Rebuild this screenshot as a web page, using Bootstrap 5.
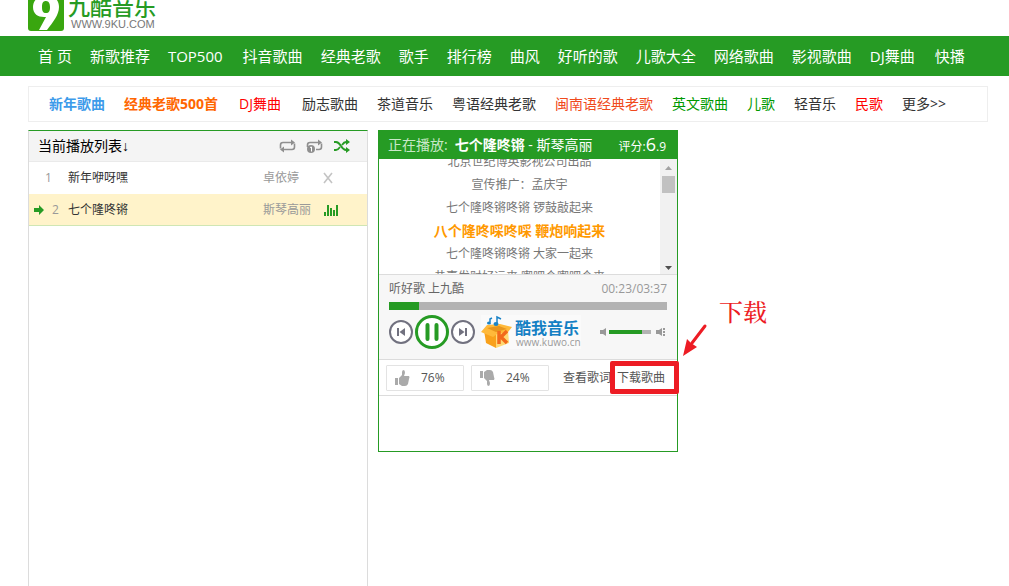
<!DOCTYPE html>
<html lang="zh-CN">
<head>
<meta charset="utf-8">
<meta name="viewport" content="width=device-width, initial-scale=1">
<title>九酷音乐</title>
<link href="https://cdn.jsdelivr.net/npm/bootstrap@5.3.0/dist/css/bootstrap.min.css" rel="stylesheet">
<script src="https://cdn.jsdelivr.net/npm/bootstrap@5.3.0/dist/js/bootstrap.bundle.min.js" defer></script>
<style>
:root{--green:#269b24;--line:#dcdcdc}
body{font-family:"Open Sans","Noto Sans CJK SC",sans-serif;font-size:12px;line-height:24px;color:#333;background:#fff}
a{text-decoration:none;color:inherit}
.page{max-width:960px;margin-left:28px;margin-right:21px}
.brand{height:36px;overflow:hidden}
.brand svg{display:block}
.mainnav{background:var(--green);height:40px;color:#fff;font-size:15px;line-height:40px;gap:18px;padding-left:38px;white-space:nowrap;overflow:hidden}
.subnav{height:36px;margin:10px 0 8px;border:1px solid #eee;font-size:14px;line-height:34px;gap:19px;padding-left:20px;white-space:nowrap;overflow:hidden}
.latin{padding-right:2px}
.c-blue{color:#3d9bea}.c-orange{color:#f60}.c-red{color:#f00}.c-rust{color:#f04a1c}.c-green{color:#090}
.columns{gap:10px}
.playlist{width:340px;border:1px solid var(--line);border-top-color:var(--green);border-bottom:0;min-height:calc(100vh - 130px)}
.listhead{height:31px;background:#f4f4f4;border-bottom:1px solid #eaeaea;font-size:14px;line-height:29px;color:#000;padding:0 17px 0 9px}
.arrowtext{font-family:"Liberation Sans",sans-serif}
.modes{gap:10px}
.iconbtn{border:0;background:none;padding:0;display:flex;align-items:center;color:inherit}
.songs{table-layout:fixed;width:100%;border-collapse:separate;border-spacing:0;line-height:30px}
.songs td{padding:0;height:32px;white-space:nowrap;vertical-align:middle}
.songs .playing td{background:#fff3ca;border-bottom:1px solid #cfe6b4}
.songs .num{color:#999;padding-left:16px}
.songs .playing .num{padding-left:5px}
.songs .who{color:#999}
.player{width:300px;border:1px solid var(--green);min-height:322px}
.playhead{background:var(--green);color:#fff;height:28px;line-height:27px;font-size:14px;padding:0 11px 0 9px;white-space:nowrap}
.playhead .tag{color:#c9e8c8;margin-right:7px}
.score{font-size:12px}
.score .big{font-size:18px}
.lyricbox{height:115px;overflow:hidden}
.lyrics{margin-top:-9px;line-height:23px;color:#777;text-align:center;white-space:nowrap}
.lyrics p{margin:0;height:23px}
.lyrics .now{color:#f90;font-size:14px;font-weight:700}
.sbar{width:17px;background:#f1f1f1}
.sthumb{width:13px;height:17px;background:#c1c1c1}
.controls{background:#f7f7f7;border-top:1px solid var(--line);border-bottom:1px solid var(--line);height:86px;padding:2px 10px 0;color:#666}
.clock{color:#999}
.track{height:8px;background:#b3b3b3;margin:1px 0 5px}
.fill{background:var(--green);height:100%}
.buttons{gap:2px}
.vol{width:42px;height:4px;background:#b3b3b3;margin:0 5px 0 2px}
.votes{height:36px;border-bottom:1px solid var(--line);padding:0 12px 0 7px;color:#555;white-space:nowrap}
.vote{width:78px;height:26px;border:1px solid #e3e3e3;background:#fff;border-radius:1px;color:#555;padding:0 8px;line-height:24px;gap:11px;margin-right:7px}
.words{margin-left:7px;margin-right:6px}
.ring{left:-7px;top:-5px;width:69px;height:33px;border:5px solid #ed1c24;border-radius:2px;pointer-events:none}
.pointer{left:65px;top:-43px;pointer-events:none}
.hint{left:102px;top:-67px;font-size:24px;font-weight:500;line-height:24px;color:#ed1c24;font-family:"Noto Serif CJK SC","Noto Sans CJK SC",serif}
</style>
</head>
<body>
<header class="page brand">
<a href="#" aria-label="九酷音乐"><svg width="130" height="36" viewBox="0 0 130 36">
<rect y="-8" width="36" height="39" rx="3" fill="#39a60f"/>
<path d="M18 -5C10 -5 5 1 5 7C5 14 10 17 16 17H18L11 30H19C25 22 31 15 31 7C31 0 26 -5 18 -5ZM18 1C21 1 22 4 22 7C22 11 21 13 18 13C15 13 14 11 14 7C14 3 15 1 18 1Z" fill="#fff" fill-rule="evenodd"/>
<text x="40" y="15" font-size="22" font-weight="500" fill="#269b24">九酷音乐</text>
<text x="43" y="28" font-size="11" fill="#777" font-family="Liberation Sans, sans-serif">WWW.9KU.COM</text>
</svg></a>
</header>
<nav class="mainnav d-flex">
<a href="#">首 页</a><a href="#">新歌推荐</a><a href="#" class="latin">TOP500</a><a href="#">抖音歌曲</a><a href="#">经典老歌</a><a href="#">歌手</a><a href="#">排行榜</a><a href="#">曲风</a><a href="#">好听的歌</a><a href="#">儿歌大全</a><a href="#">网络歌曲</a><a href="#">影视歌曲</a><a href="#" class="latin">DJ舞曲</a><a href="#">快播</a>
</nav>
<main class="page">
<nav class="subnav d-flex">
<a href="#" class="c-blue fw-bold">新年歌曲</a><a href="#" class="c-orange fw-bold latin">经典老歌500首</a><a href="#" class="c-red latin">DJ舞曲</a><a href="#">励志歌曲</a><a href="#">茶道音乐</a><a href="#">粤语经典老歌</a><a href="#" class="c-rust">闽南语经典老歌</a><a href="#" class="c-green">英文歌曲</a><a href="#" class="c-green">儿歌</a><a href="#">轻音乐</a><a href="#" class="c-red">民歌</a><a href="#">更多&gt;&gt;</a>
</nav>
<div class="columns d-flex align-items-start">
<section class="playlist flex-shrink-0">
<div class="listhead d-flex justify-content-between">
<span>当前播放列表<span class="arrowtext">↓</span></span>
<div class="modes d-flex align-items-center">
<button class="iconbtn" type="button" aria-label="列表循环"><svg width="17" height="14" viewBox="0 0 17 14" fill="none" stroke="#8f8f8f" stroke-width="1.6"><path d="M1.500 9.500V6Q1.500 3.500 4 3.500H14M15.500 4.500V8Q15.500 10.500 13 10.500H3"/><path d="M12 .5L16 3.500L12 6.500ZM5 7.500L1 10.500L5 13.500Z" fill="#8f8f8f" stroke="none"/></svg></button>
<button class="iconbtn" type="button" aria-label="单曲循环"><svg width="17" height="14" viewBox="0 0 17 14" fill="none" stroke="#8f8f8f" stroke-width="1.6"><path d="M1.500 8V6Q1.500 3.500 4 3.500H14M15.500 4.500V8Q15.500 10.500 13 10.500H10"/><path d="M12 .5L16 3.500L12 6.500Z" fill="#8f8f8f" stroke="none"/><circle cx="5" cy="10" r="4" fill="#8f8f8f" stroke="none"/><path d="M4 8.500L5.500 8V12.500" stroke="#fff" stroke-width="1"/></svg></button>
<button class="iconbtn" type="button" aria-label="随机播放"><svg width="17" height="14" viewBox="0 0 17 14" fill="none" stroke="#269b24" stroke-width="1.8"><path d="M1 3H3C8 3 8 11 13 11H14M1 11H3C5 11 6 9.500 7 8M9 6C10 4.500 11 3 13 3H14"/><path d="M13 0L17 3L13 6ZM13 8L17 11L13 14Z" fill="#269b24" stroke="none"/></svg></button>
</div>
</div>
<table class="songs">
<colgroup><col style="width:39px"><col><col style="width:60px"><col style="width:44px"></colgroup>
<tbody>
<tr><td class="num">1</td><td>新年咿呀嘿</td><td class="who">卓依婷</td><td><button class="iconbtn" type="button" aria-label="删除"><svg width="11" height="12" viewBox="0 0 11 12" stroke="#c4c4c4" stroke-width="1.6"><path d="M1 1L9 11M9 1L1 11"/></svg></button></td></tr>
<tr class="playing"><td class="num"><svg class="me-2 align-middle" width="10" height="10" viewBox="0 0 10 10"><path d="M0 3H5V0L10 5L5 10V7H0Z" fill="#269b24"/></svg>2</td><td>七个隆咚锵</td><td class="who">斯琴高丽</td><td><svg class="d-block" width="15" height="12" viewBox="0 0 15 12" fill="#269b24"><path d="M1 8H3V12H1ZM4 1H6V12H4ZM7 4H9V12H7ZM10 6H12V12H10ZM13 1H15V12H13Z"/></svg></td></tr>
</tbody>
</table>
</section>
<section class="player flex-shrink-0">
<div class="playhead d-flex justify-content-between">
<div><span class="tag">正在播放:</span><b>七个隆咚锵</b> - 斯琴高丽</div>
<div class="score">评分:<span class="big">6</span>.9</div>
</div>
<div class="lyricbox d-flex">
<div class="lyrics flex-grow-1">
<p>北京世纪博英影视公司出品</p><p>宣传推广：孟庆宇</p><p>七个隆咚锵咚锵 锣鼓敲起来</p><p class="now">八个隆咚啋咚啋 鞭炮响起来</p><p>七个隆咚锵咚锵 大家一起来</p><p>恭喜发财好运来 嘲吧个嘲吧个来</p>
</div>
<div class="sbar d-flex flex-column align-items-center justify-content-between">
<div class="d-flex flex-column align-items-center"><svg width="17" height="17" viewBox="0 0 17 17"><path d="M5 11H12L8.500 7Z" fill="#a3a3a3"/></svg><div class="sthumb"></div></div>
<svg width="17" height="13" viewBox="0 0 17 13"><path d="M5 5H12L8.500 9Z" fill="#505050"/></svg>
</div>
</div>
<div class="controls">
<div class="d-flex justify-content-between"><span>听好歌 上九酷</span><span class="clock">00:23/03:37</span></div>
<div class="track"><div class="fill" style="width:10.8%"></div></div>
<div class="d-flex align-items-center justify-content-between">
<div class="buttons d-flex align-items-center">
<button class="iconbtn" type="button" aria-label="上一首"><svg width="24" height="24" viewBox="0 0 24 24"><circle cx="12" cy="12" r="11" fill="#fff" stroke="#71717f" stroke-width="2"/><path d="M8 8H10V16H8ZM16 8V16L10.500 12Z" fill="#71717f"/></svg></button>
<button class="iconbtn" type="button" aria-label="暂停"><svg width="34" height="34" viewBox="0 0 34 34"><circle cx="17" cy="17" r="15.500" fill="#fff" stroke="#269b24" stroke-width="3"/><path d="M12.500 10V24M21.500 10V24" stroke="#269b24" stroke-width="4" stroke-linecap="round"/></svg></button>
<button class="iconbtn" type="button" aria-label="下一首"><svg width="24" height="24" viewBox="0 0 24 24"><circle cx="12" cy="12" r="11" fill="#fff" stroke="#71717f" stroke-width="2"/><path d="M14 8H16V16H14ZM8 8V16L13.500 12Z" fill="#71717f"/></svg></button>
<a href="#" class="ms-1" aria-label="酷我音乐"><svg class="d-block" width="100" height="34" viewBox="0 0 100 34">
<rect width="100" height="34" fill="#fafafa"/>
<path d="M3 15L15 19V33L5 28Z" fill="#f9a11b"/><path d="M15 19L27 15L28 28L15 33Z" fill="#ffd873"/>
<path d="M0 17L6 10L19 9L31 12L27 17L16 19L12 22Z" fill="#ffb93a"/><path d="M6 13L18 11L26 14L15 17Z" fill="#e8951d"/>
<path d="M18 16V29M26 16L20 22L26 28" fill="none" stroke="#f26a1b" stroke-width="3.500"/>
<path d="M9 7V4L11 3M16 8V2L20 4" fill="none" stroke="#1b83c6" stroke-width="1.500"/><ellipse cx="8" cy="8" rx="2" ry="1.500" fill="#1b83c6"/><ellipse cx="15" cy="9" rx="2.500" ry="2" fill="#1b83c6"/>
<text x="34" y="19" font-size="16" font-weight="700" fill="#1480c4">酷我音乐</text>
<text x="35" y="31" font-size="10" fill="#9b9b9b">www.kuwo.cn</text>
</svg></a>
</div>
<div class="d-flex align-items-center">
<svg width="7" height="8" viewBox="0 0 7 8"><path d="M0 2H3L6 0V8L3 6H0Z" fill="#999"/></svg>
<div class="vol"><div class="fill" style="width:79%"></div></div>
<svg width="11" height="8" viewBox="0 0 11 8" fill="#999"><path d="M0 2H3L6 0V8L3 6H0ZM7 0H9V2H7ZM7 3H9V5H7ZM7 6H9V8H7Z"/></svg>
</div>
</div>
</div>
<div class="votes d-flex align-items-center">
<button type="button" class="vote d-flex align-items-center"><svg width="15" height="16" viewBox="0 0 15 16" fill="#aaa"><path d="M0 8H3V15H0ZM4 8L7 5V2Q7 0 9 0Q10 1 10 3L9 6H14Q15 7 14 9L13 14Q12 16 10 16H7L4 14Z"/></svg>76%</button>
<button type="button" class="vote d-flex align-items-center"><svg width="15" height="16" viewBox="0 0 15 16" fill="#aaa"><path d="M0 1H3V8H0ZM4 8L7 11V14Q7 16 9 16Q10 15 10 13L9 10H14Q15 9 14 7L13 2Q12 0 10 0H7L4 2Z"/></svg>24%</button>
<a href="#" class="words">查看歌词</a>
<div class="position-relative"><a href="#">下载歌曲</a>
<div class="ring position-absolute"></div>
<svg class="pointer position-absolute" width="26" height="36" viewBox="0 0 26 36"><path d="M23 3L10 20" stroke="#ed1c24" stroke-width="3" stroke-linecap="round"/><path d="M1 33L5 16L9 20L15 24Z" fill="#ed1c24"/></svg>
<div class="hint position-absolute">下载</div>
</div>
</div>
</section>
</div>
</main>
</body>
</html>
